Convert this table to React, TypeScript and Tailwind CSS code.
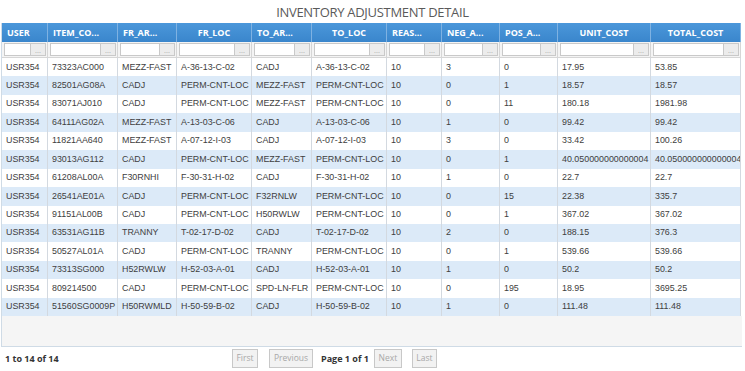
import { Fragment } from "react";

type Row = string[];

const columns = [
  { label: "USER", align: "justify-start pl-[5px]" },
  { label: "ITEM_CO...", align: "justify-start pl-[5px]" },
  { label: "FR_AR...", align: "justify-start pl-[5px]" },
  { label: "FR_LOC", align: "justify-center" },
  { label: "TO_AR...", align: "justify-start pl-[5px]" },
  { label: "TO_LOC", align: "justify-center" },
  { label: "REAS...", align: "justify-start pl-[5px]" },
  { label: "NEG_A...", align: "justify-start pl-[5px]" },
  { label: "POS_A...", align: "justify-start pl-[5px]" },
  { label: "UNIT_COST", align: "justify-center" },
  { label: "TOTAL_COST", align: "justify-center" },
];

const rows: Row[] = [
  ["USR354", "73323AC000", "MEZZ-FAST", "A-36-13-C-02", "CADJ", "A-36-13-C-02", "10", "3", "0", "17.95", "53.85"],
  ["USR354", "82501AG08A", "CADJ", "PERM-CNT-LOC", "MEZZ-FAST", "PERM-CNT-LOC", "10", "0", "1", "18.57", "18.57"],
  ["USR354", "83071AJ010", "CADJ", "PERM-CNT-LOC", "MEZZ-FAST", "PERM-CNT-LOC", "10", "0", "11", "180.18", "1981.98"],
  ["USR354", "64111AG02A", "MEZZ-FAST", "A-13-03-C-06", "CADJ", "A-13-03-C-06", "10", "1", "0", "99.42", "99.42"],
  ["USR354", "11821AA640", "MEZZ-FAST", "A-07-12-I-03", "CADJ", "A-07-12-I-03", "10", "3", "0", "33.42", "100.26"],
  ["USR354", "93013AG112", "CADJ", "PERM-CNT-LOC", "MEZZ-FAST", "PERM-CNT-LOC", "10", "0", "1", "40.050000000000004", "40.050000000000004"],
  ["USR354", "61208AL00A", "F30RNHI", "F-30-31-H-02", "CADJ", "F-30-31-H-02", "10", "1", "0", "22.7", "22.7"],
  ["USR354", "26541AE01A", "CADJ", "PERM-CNT-LOC", "F32RNLW", "PERM-CNT-LOC", "10", "0", "15", "22.38", "335.7"],
  ["USR354", "91151AL00B", "CADJ", "PERM-CNT-LOC", "H50RWLW", "PERM-CNT-LOC", "10", "0", "1", "367.02", "367.02"],
  ["USR354", "63531AG11B", "TRANNY", "T-02-17-D-02", "CADJ", "T-02-17-D-02", "10", "2", "0", "188.15", "376.3"],
  ["USR354", "50527AL01A", "CADJ", "PERM-CNT-LOC", "TRANNY", "PERM-CNT-LOC", "10", "0", "1", "539.66", "539.66"],
  ["USR354", "73313SG000", "H52RWLW", "H-52-03-A-01", "CADJ", "H-52-03-A-01", "10", "1", "0", "50.2", "50.2"],
  ["USR354", "809214500", "CADJ", "PERM-CNT-LOC", "SPD-LN-FLR", "PERM-CNT-LOC", "10", "0", "195", "18.95", "3695.25"],
  ["USR354", "51560SG0009P", "H50RWMLD", "H-50-59-B-02", "CADJ", "H-50-59-B-02", "10", "1", "0", "111.48", "111.48"],
];

const headFont = { fontFamily: '"Open Sans", "Noto Sans", sans-serif' };

function FilterCell() {
  return (
    <div className="flex h-full items-stretch pl-[2px] pr-[1px] py-[1px]">
      <div className="flex-1 border border-[#c9c9c9] bg-white" />
      <div className="flex w-[15px] items-end justify-center border border-l-0 border-[#c9c9c9] bg-[#ececec] text-[7px] leading-[9px] text-[#9a9a9a]">
        ...
      </div>
    </div>
  );
}

function PagerButton({ label, className }: { label: string; className?: string }) {
  return (
    <div
      className={`flex h-[19px] items-center justify-center whitespace-nowrap border border-[#c8c8c8] bg-[#f2f2f2] text-[8.5px] text-[#a8a8a8] ${className ?? ""}`}
      style={headFont}
    >
      {label}
    </div>
  );
}

export default function App() {
  return (
    <div className="h-[371px] w-[745px] bg-white" style={{ fontFamily: '"Liberation Sans", Arial, sans-serif' }}>
      <h1
        className="pt-[2px] text-center text-[13px] leading-[20px] tracking-[-0.3px] text-[#5a5a5a]"
        style={headFont}
      >
        INVENTORY ADJUSTMENT DETAIL
      </h1>

      <div className="ml-[1px] mt-[1px] w-[741px] border-l border-b border-[#cfdbe6]">
        <div className="grid grid-cols-[46px_70px_59px_75px_60px_75px_55px_58px_58px_93px_90px]">
          {columns.map((c) => (
            <div
              key={c.label}
              className={`flex h-[19px] items-center border-r border-[#7fb2e2] bg-gradient-to-b from-[#4b97da] to-[#3a86cc] text-[9px] font-bold text-white ${c.align}`}
              style={headFont}
            >
              {c.label}
            </div>
          ))}
          {columns.map((c) => (
            <div key={c.label + "f"} className="h-[16px] border-r border-b border-[#d6d6d6] bg-[#f4f4f4]">
              <FilterCell />
            </div>
          ))}
          {rows.map((r, i) => (
            <Fragment key={i}>
              {r.map((v, j) => (
                <div
                  key={j}
                  className={`flex h-[18.45px] items-center overflow-hidden whitespace-nowrap border-r border-[#d3d9e0] pl-[4px] text-[8.9px] text-[#404040] ${
                    i % 2 === 1 ? "bg-[#dceaf8]" : "bg-white"
                  }`}
                >
                  {v}
                </div>
              ))}
            </Fragment>
          ))}
        </div>
        <div className="h-[30px] bg-[#f5f5f5]" />
      </div>

      <div className="mt-[2px] flex items-center">
        <div className="w-[232px] pl-[5px] text-[9px] font-bold text-[#333]" style={headFont}>
          1 to 14 of 14
        </div>
        <div className="flex items-center">
          <PagerButton label="First" className="w-[26px]" />
          <PagerButton label="Previous" className="ml-[11px] w-[44px]" />
          <div className="ml-[8px] whitespace-nowrap text-[9px] font-bold text-[#333]" style={headFont}>
            Page 1 of 1
          </div>
          <PagerButton label="Next" className="ml-[5px] w-[28px]" />
          <PagerButton label="Last" className="ml-[10px] w-[25px]" />
        </div>
      </div>
    </div>
  );
}
